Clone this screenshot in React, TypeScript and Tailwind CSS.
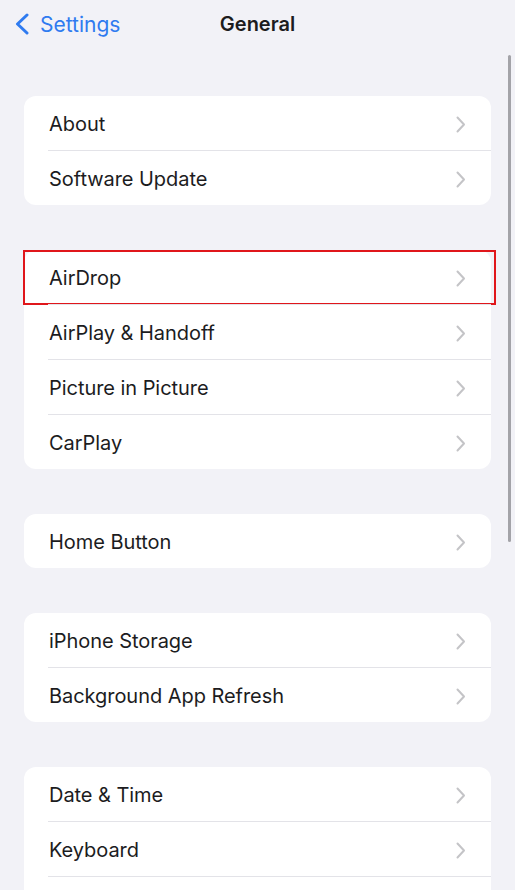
import React from "react";

type Row = { label: string; highlight?: boolean };

const groups: Row[][] = [
  [{ label: "About" }, { label: "Software Update" }],
  [
    { label: "AirDrop", highlight: true },
    { label: "AirPlay & Handoff" },
    { label: "Picture in Picture" },
    { label: "CarPlay" },
  ],
  [{ label: "Home Button" }],
  [{ label: "iPhone Storage" }, { label: "Background App Refresh" }],
  [{ label: "Date & Time" }, { label: "Keyboard" }, { label: "" }],
];

function Chevron() {
  return (
    <svg width="10" height="17" viewBox="0 0 10 17" fill="none">
      <path d="M1.5 1.5L8 8.5L1.5 15.5" stroke="#c4c4c7" strokeWidth="2" strokeLinecap="round" strokeLinejoin="round" />
    </svg>
  );
}

export default function App() {
  return (
    <div
      className="relative w-[515px] h-[890px] overflow-hidden bg-[#f2f2f7] text-[#1c1c1e]"
      style={{ fontFamily: "Inter, 'Noto Sans', sans-serif" }}
    >
      <div className="relative h-[48px] flex items-center">
        <div className="flex items-center pl-[14px] gap-[10px] text-[#2f7bf0]">
          <svg width="16" height="22" viewBox="0 0 16 22" fill="none">
            <path d="M13 2L3.5 11L13 20" stroke="#2f7bf0" strokeWidth="3" strokeLinecap="round" strokeLinejoin="round" />
          </svg>
          <span className="text-[21px] leading-none">Settings</span>
        </div>
        <div className="absolute left-0 right-0 top-0 h-[48px] flex items-center justify-center pointer-events-none">
          <span className="text-[20px] font-semibold leading-none">General</span>
        </div>
      </div>

      <div className="flex flex-col gap-[45px] pt-[48px] pl-[24px] w-[491px]">
        {groups.map((rows, gi) => (
          <div key={gi} className="bg-white rounded-[12px] flex flex-col">
            {rows.map((r, ri) => (
              <div key={ri} className="relative flex flex-col">
                {ri > 0 && <div className="ml-[24px] h-px bg-[#e3e3e8]" />}
                <div className="h-[54px] flex items-center justify-between pl-[25px] pr-[25px] pt-[2px]">
                  <span className="text-[20px] leading-none tracking-[-0.05px]">{r.label}</span>
                  {r.label && <Chevron />}
                </div>
                {r.highlight && (
                  <div className="absolute -left-[1px] -right-[5px] top-0 bottom-[-1px] border-2 border-[#e0161b] pointer-events-none" />
                )}
              </div>
            ))}
          </div>
        ))}
      </div>

      <div className="absolute left-[508px] top-[55px] w-[3px] h-[487px] rounded-full bg-[#a3a3a8]" />
    </div>
  );
}
